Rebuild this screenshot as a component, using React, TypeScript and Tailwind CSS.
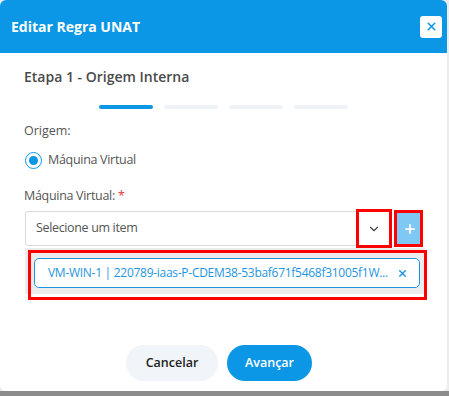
import { X, ChevronDown, Plus } from "lucide-react";

const STEPS = [true, false, false, false];

export default function App() {
  return (
    <div className="h-[396px] w-[449px] overflow-hidden bg-[#ececec] font-['Open_Sans',sans-serif]">
      <div className="flex h-[391px] w-[447px] flex-col overflow-hidden rounded-[6px] bg-white">
        <div className="flex h-[53px] shrink-0 items-center justify-between bg-[#0b97e5] pl-[11px] pr-[5px]">
          <div className="text-[14px] font-bold text-white">Editar Regra UNAT</div>
          <button className="flex h-[22px] w-[22px] items-center justify-center rounded-[3px] bg-white text-[#0b97e5]">
            <X className="h-[13px] w-[13px]" strokeWidth={3} />
          </button>
        </div>

        <div className="flex flex-1 flex-col px-[24px] pt-[13px]">
          <div className="text-[14px] font-semibold text-[#4a4a4a]">Etapa 1 - Origem Interna</div>

          <div className="mt-[18px] flex justify-center gap-[11px]">
            {STEPS.map((active, i) => (
              <div
                key={i}
                className={`h-[4px] w-[54px] rounded-full ${active ? "bg-[#0b97e5]" : "bg-[#eef3f8]"}`}
              />
            ))}
          </div>

          <div className="mt-[13px] text-[12.5px] text-[#555]">Origem:</div>

          <div className="mt-[10px] flex items-center gap-[6px] pl-[1px]">
            <div className="flex h-[17px] w-[17px] items-center justify-center rounded-full border-[1.5px] border-[#0b97e5]">
              <div className="h-[9px] w-[9px] rounded-full bg-[#0b97e5]" />
            </div>
            <div className="text-[12.5px] tracking-[-0.3px] text-[#555]">Máquina Virtual</div>
          </div>

          <div className="mt-[17px] text-[12.5px] tracking-[-0.3px] text-[#555]">
            Máquina Virtual: <span className="text-[#e53935]">*</span>
          </div>

          <div className="relative mt-[6px] pl-[1px]">
            <div className="flex items-center gap-[5px]">
              <div className="flex h-[35px] w-[367px] items-center justify-between rounded-l-[3px] border border-[#d9d9d9] pl-[10px] pr-[10px]">
                <span className="text-[12.5px] tracking-[-0.35px] text-[#555]">Selecione um item</span>
                <ChevronDown className="h-[14px] w-[14px] text-[#444]" strokeWidth={2} />
              </div>
              <div className="flex h-[31px] w-[25px] items-center justify-center bg-[#80c8f4] text-white">
                <Plus className="h-[14px] w-[14px]" strokeWidth={3} />
              </div>
            </div>
            <div className="absolute left-[332px] top-[-2px] h-[39px] w-[36px] border-[3px] border-[#ff0000]" />
            <div className="absolute left-[370px] top-[-1px] h-[37px] w-[29px] border-[3px] border-[#ff0000]" />

            <div className="relative mt-[2px] w-[400px] bg-[#ececec] pb-[6px] pl-[9px] pr-[5px] pt-[10px]">
              <div className="flex h-[30px] items-center justify-between rounded-[5px] border border-[#1e95e0] bg-white pl-[13px] pr-[11px]">
                <span className="whitespace-nowrap text-[12px] tracking-[-0.28px] text-[#1e95e0]">
                  VM-WIN-1 | 220789-iaas-P-CDEM38-53baf671f5468f31005f1W...
                </span>
                <X className="ml-[6px] h-[11px] w-[11px] shrink-0 text-[#1e95e0]" strokeWidth={3} />
              </div>
              <div className="absolute left-[3px] top-[2px] h-[50px] w-[399px] border-[3px] border-[#ff0000]" />
            </div>
          </div>

          <div className="mt-[51px] flex justify-center gap-[9px] pr-[9px]">
            <button className="h-[36px] w-[92px] rounded-full bg-[#f1f4f8] text-[12.5px] font-semibold text-[#222]">
              Cancelar
            </button>
            <button className="h-[36px] w-[85px] rounded-full bg-[#0b97e5] text-[12.5px] font-semibold text-white">
              Avançar
            </button>
          </div>
        </div>
      </div>
      <div className="h-[5px] w-full bg-[#8c8c8c]" />
    </div>
  );
}
